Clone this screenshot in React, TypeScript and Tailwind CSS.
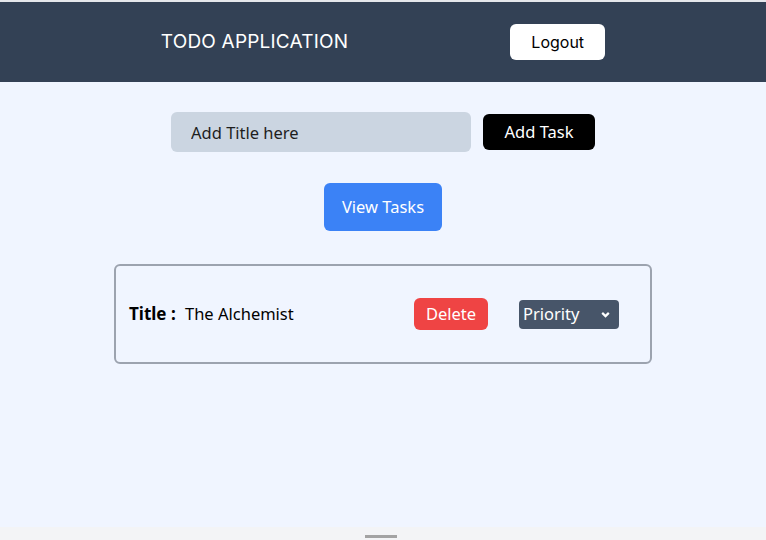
import React from 'react';

export default function App() {
  return (
    <div className="min-h-[540px] flex flex-col bg-[#f3f4f8]" style={{ fontFamily: '"Noto Sans", "Open Sans", sans-serif' }}>
      <div className="h-[2px] bg-[#e5e7eb]" />
      <header className="h-20 bg-[#334155] flex items-center justify-center gap-[162px]">
        <h1 className="text-white text-[19px] tracking-[0.2px] font-['Inter',sans-serif]">TODO APPLICATION</h1>
        <button className="bg-white text-black rounded-md w-[95px] h-9 text-[16px] font-['Inter',sans-serif]">
          Logout
        </button>
      </header>

      <main className="bg-[#f0f5ff] h-[445px] flex flex-col items-center">
        <div className="mt-[30px] flex items-center gap-3">
          <input
            className="w-[300px] h-10 rounded-md bg-[#cbd5e1] px-5 text-[16.5px] text-black placeholder:text-[#1e1e1e] outline-none"
            placeholder="Add Title here"
          />
          <button className="w-28 h-9 rounded-md bg-black text-white text-[16.5px]">Add Task</button>
        </div>

        <button className="mt-[31px] w-[118px] h-12 rounded-md bg-[#3b82f6] text-white text-[16.5px]">View Tasks</button>

        <div className="mt-[33px] w-[538px] h-[100px] border-2 border-[#9ca3af] rounded-md flex items-center pl-[13px]">
          <span className="w-[56px] font-bold text-[17px] text-black">Title :</span>
          <span className="w-[229px] text-[16.5px] text-black">The Alchemist</span>
          <button className="w-[74px] h-8 rounded-md bg-[#ef4444] text-white text-[16.5px]">Delete</button>
          <div className="ml-[31px] w-[100px] h-[29px] rounded bg-[#475569] text-white flex items-center justify-between pl-1 pr-2">
            <span className="text-[16.5px]">Priority</span>
            <svg width="11" height="11" viewBox="0 0 10 10" fill="none" stroke="white" strokeWidth="2">
              <path d="M2 3.5l3 3 3-3" />
            </svg>
          </div>
        </div>
      </main>
      <div className="flex-1 bg-[#f3f4f6] flex items-end justify-center">
        <div className="w-8 h-[3px] bg-[#a3a3a3] mb-[2px] -ml-1" />
      </div>
    </div>
  );
}
